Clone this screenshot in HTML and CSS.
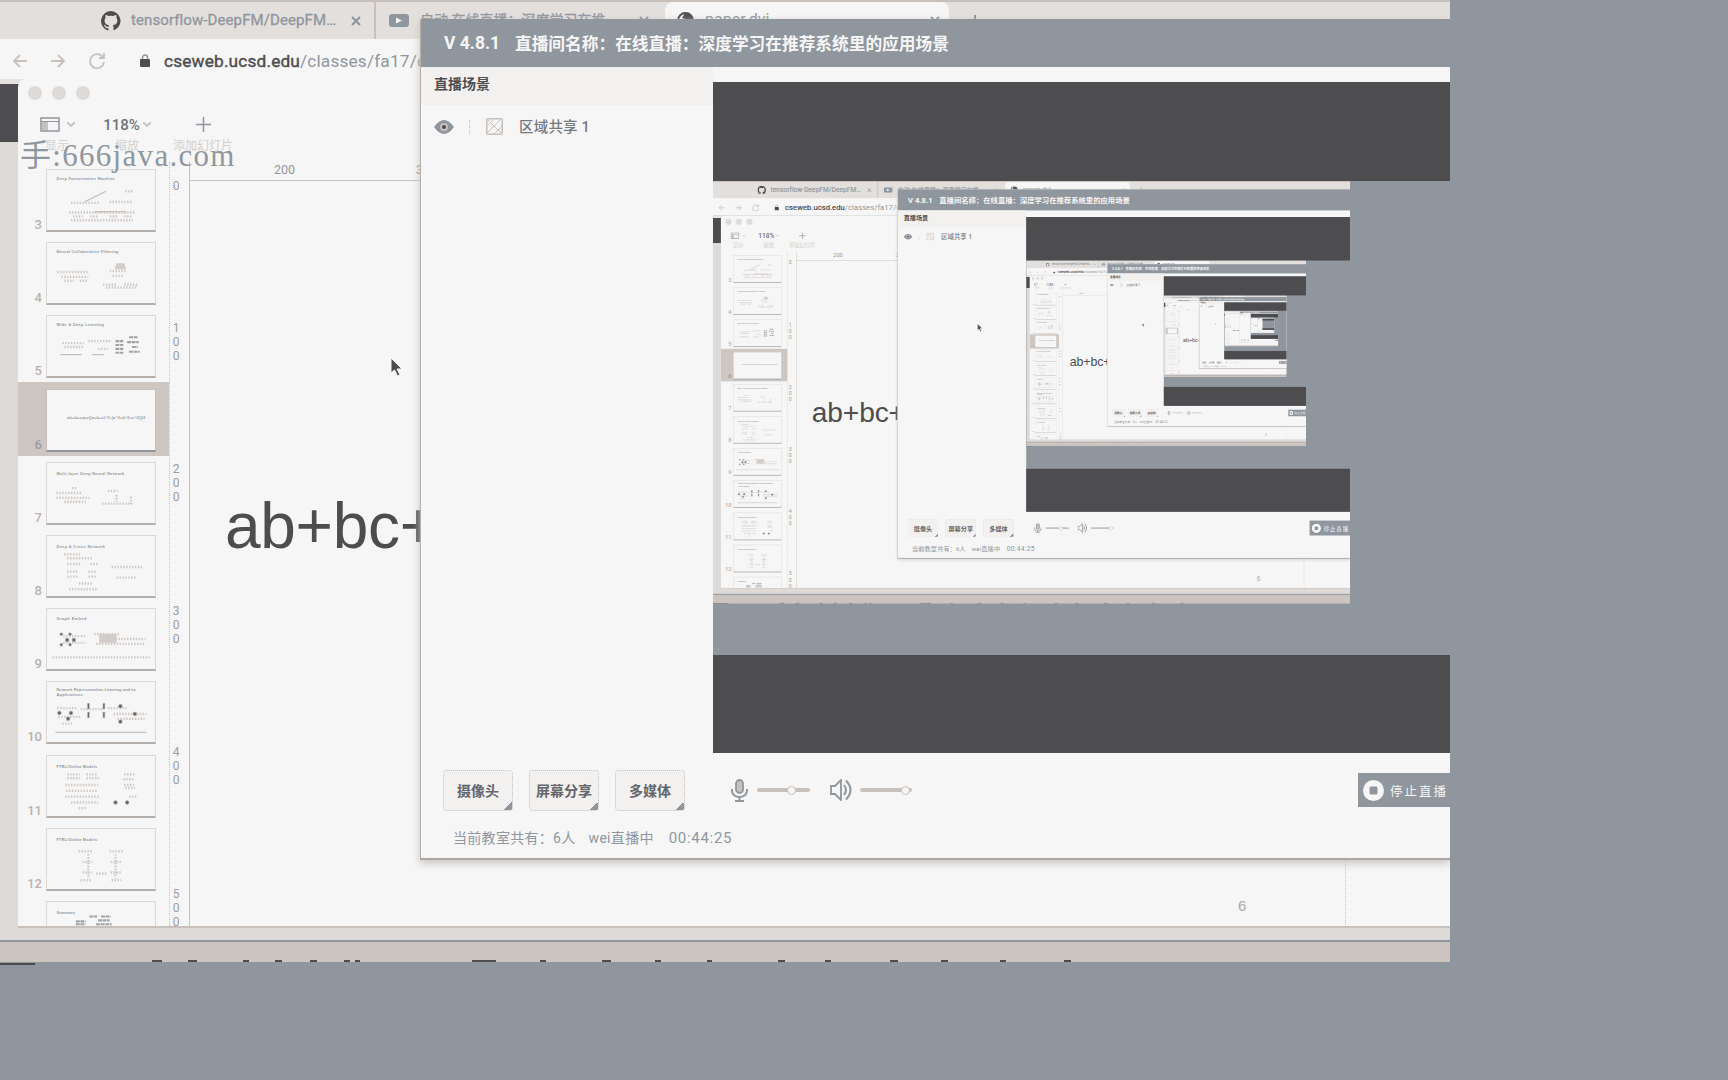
FILE: index.html
```html
<!DOCTYPE html>
<html lang="zh-CN">
<head>
<meta charset="utf-8">
<title>在线直播</title>
<link rel="stylesheet" href="styles.css">
</head>
<body>
<svg width="0" height="0" class="defs" aria-hidden="true">
  <symbol id="github" viewBox="0 0 16 16"><path d="M8 0a8 8 0 0 0-2.5 15.6c.4.1.5-.2.5-.4v-1.500c-2.200.5-2.700-1-2.700-1-.4-.9-.9-1.200-.9-1.200-.7-.5.1-.5.1-.5.8.1 1.200.8 1.200.8.7 1.200 1.900.9 2.300.7.1-.5.3-.9.5-1.100-1.800-.2-3.600-.9-3.600-4 0-.9.3-1.600.8-2.100-.1-.2-.4-1 .1-2.100 0 0 .7-.2 2.200.8a7.500 7.500 0 0 1 4 0c1.500-1 2.200-.8 2.200-.8.4 1.100.2 1.900.1 2.100.5.6.8 1.300.8 2.100 0 3.100-1.900 3.700-3.700 3.900.3.300.6.8.6 1.500v2.200c0 .2.1.5.6.4A8 8 0 0 0 8 0z" fill="#4d4d4f"/></symbol>
</svg>

<div class="screen" id="screen">
  <div class="browser">
    <div class="tabs">
      <div class="tab tab-repo">
        <svg width="20" height="20"><use href="#github"/></svg>
        <span class="tab-title">tensorflow-DeepFM/DeepFM…</span>
        <svg width="10" height="10" viewBox="0 0 10 10" class="line"><path d="M1 1l8 8M9 1l-8 8"/></svg>
      </div>
      <div class="tab tab-video">
        <svg width="20" height="13" viewBox="0 0 20 13"><rect width="20" height="13" rx="3" fill="#8f969e"/><path d="M7 3.500l6 3-6 3z" fill="#f6f6f6"/></svg>
        <span class="tab-title">启动 在线直播：深度学习在推…</span>
        <svg width="10" height="10" viewBox="0 0 10 10" class="line"><path d="M1 1l8 8M9 1l-8 8"/></svg>
      </div>
      <div class="tab tab-paper">
        <svg width="17" height="17" viewBox="0 0 17 17"><circle cx="8.500" cy="8.500" r="7.500" fill="#f6f6f6" stroke="#4d4d4f" stroke-width="2"/><path d="M8 1c6 0 8 4 8 7.500L12 12 8 7 5 6z" fill="#4d4d4f"/></svg>
        <span class="tab-title">paper.dvi</span>
        <svg width="10" height="10" viewBox="0 0 10 10" class="line"><path d="M1 1l8 8M9 1l-8 8"/></svg>
      </div>
      <svg width="12" height="12" viewBox="0 0 12 12" class="line new-tab"><path d="M6 0v12M0 6h12"/></svg>
    </div>
    <div class="address">
      <svg width="14" height="14" viewBox="0 0 14 14" class="nav"><path d="M14 7H1M7 1L1 7l6 6"/></svg>
      <svg width="14" height="14" viewBox="0 0 14 14" class="nav"><path d="M0 7h13M7 1l6 6-6 6"/></svg>
      <svg width="16" height="16" viewBox="0 0 16 16" class="nav"><path d="M14 4.500A7 7 0 1 0 15 9M15 0v5h-5"/></svg>
      <div class="url">
        <svg width="10" height="13" viewBox="0 0 10 13"><rect y="5" width="10" height="8" rx="1" fill="#4d4d4f"/><path d="M2.500 5V3.500a2.500 2.500 0 0 1 5 0V5" fill="none" stroke="#8f969e" stroke-width="1.500"/></svg>
        <span><b>cseweb.ucsd.edu</b>/classes/fa17/cse291-b/paper.dvi</span>
      </div>
    </div>
  </div>

  <div class="edge"></div>

  <div class="keynote">
    <div class="lights"><i></i><i></i><i></i></div>
    <div class="tools">
      <div class="tool view"><span class="face"><svg width="20" height="15" viewBox="0 0 20 15"><rect x="1" y="1" width="18" height="13" fill="none" stroke="#8f969e" stroke-width="1.500"/><path d="M1 4.500h18M7 4.500V14" stroke="#8f969e" fill="none"/><path d="M2 5h4v8H2z" fill="#c8c0bb"/></svg><svg width="8" height="5" viewBox="0 0 8 5" class="nav"><path d="M0 0l4 4 4-4"/></svg></span><small>显示</small></div>
      <div class="tool zoom"><span class="face">118%<svg width="8" height="5" viewBox="0 0 8 5" class="nav"><path d="M0 0l4 4 4-4"/></svg></span><small>缩放</small></div>
      <div class="tool add"><span class="face"><svg width="15" height="15" viewBox="0 0 15 15" class="line"><path d="M7.500 0v15M0 7.500h15" stroke-width="1.500"/></svg></span><small>添加幻灯片</small></div>
    </div>
    <div class="work">
      <div class="slides">
        <div class="slide"><em>3</em><svg class="card" viewBox="0 0 110 62"><text x="9" y="10" textLength="60">Deep Factorization Machine</text><g class="dots"><path d="M24 34h30M64 33h24M22 44h68M24 52h64M26 48h10M44 48h8M64 48h8M79 48h8"/><path d="M80 22h9"/></g><path class="thin" d="M38 33L60 22M48 43h33"/></svg></div>
        <div class="slide"><em>4</em><svg class="card" viewBox="0 0 110 62"><text x="9" y="10" textLength="64">Neural Collaborative Filtering</text><g class="dots"><path d="M10 30h32M14 35h28M17 39h10M33 39h8M64 29h18M67 34h12M57 43h14M79 43h14M60 46h32"/></g><path class="soft" d="M71 21h8l2 6H69z"/></svg></div>
        <div class="slide"><em>5</em><svg class="card" viewBox="0 0 110 62"><text x="9" y="10" textLength="49">Wide &amp; Deep Learning</text><g class="dots"><path d="M15 28h22M42 26h24M17 32h20M52 34h10"/></g><path class="thin" d="M13 40h22M46 40h12"/><g class="bars"><path d="M70 26h8M70 30h8M70 34h8M70 38h8M84 22h9M82 27h12M87 32h6M84 37h11"/></g></svg></div>
        <div class="slide active"><em>6</em><svg class="card" viewBox="0 0 110 62"><text x="20" y="30" textLength="81">ab+bc+ac=((a+b+c)^2-(a^2+b^2+c^2))/2</text></svg></div>
        <div class="slide"><em>7</em><svg class="card" viewBox="0 0 110 62"><text x="9" y="12" textLength="70">Multi-layer Deep Neural Network</text><g class="dots"><path d="M9 31h27M9 36h34M17 40h24M25 26h6M56 42h32M62 29h10M71 33v7M86 35v7"/></g></svg></div>
        <div class="slide"><em>8</em><svg class="card" viewBox="0 0 110 62"><text x="9" y="12" textLength="50">Deep &amp; Cross Network</text><g class="dots"><path d="M17 19h18M20 23h26M20 29h15M44 29h8M20 37h12M42 37h9M20 42h12M42 42h9M32 49h15M22 55h30M66 32h32M71 43h20"/></g></svg></div>
        <div class="slide"><em>9</em><svg class="card" viewBox="0 0 110 62"><text x="9" y="11" textLength="31">Graph Embed</text><g class="dots"><path d="M16 28h24M16 35h22M48 26h26M70 31h31M50 36h50M5 50h102"/></g><path class="soft" d="M53 26h18v9H53z"/><g class="nodes"><circle cx="14" cy="26" r="1.500"/><circle cx="23" cy="26" r="1.500"/><circle cx="20" cy="32" r="2"/><circle cx="27" cy="32" r="2"/><circle cx="14" cy="37" r="1.500"/><circle cx="23" cy="37" r="1.500"/></g></svg></div>
        <div class="slide"><em>10</em><svg class="card" viewBox="0 0 110 62"><text x="9" y="9" textLength="82">Network Representation Learning and its</text><text x="9" y="14" textLength="27">Applications</text><g class="dots"><path d="M10 27h20M11 36h24M15 43h10M34 28h24M62 27h20M68 33h34M72 38h28"/></g><path class="thin" d="M8 52h94"/><g class="nodes"><circle cx="12" cy="32" r="2"/><circle cx="24" cy="32" r="2"/><circle cx="21" cy="38" r="2"/><circle cx="75" cy="25" r="2"/><circle cx="90" cy="33" r="2"/><circle cx="75" cy="41" r="2"/><path d="M41 22h2v6h-2zM57 22h2v6h-2zM41 31h2v6h-2zM57 31h2v6h-2z"/></g></svg></div>
        <div class="slide"><em>11</em><svg class="card" viewBox="0 0 110 62"><text x="9" y="12" textLength="42">FTRL/Online Models</text><g class="dots"><path d="M20 19h13M40 19h12M20 23h13M40 23h13M18 30h34M19 36h33M18 42h36M24 48h28M32 54h8M79 19h11M78 24h12M79 30h10M80 33h10M84 42h8"/></g><g class="nodes"><circle cx="70" cy="48" r="2"/><circle cx="82" cy="48" r="2"/></g></svg></div>
        <div class="slide"><em>12</em><svg class="card" viewBox="0 0 110 62"><text x="9" y="12" textLength="42">FTRL/Online Models</text><g class="dots"><path d="M32 23h14M64 23h14M36 34h10M65 34h11M36 45h10M50 46h12M65 45h11M34 53h12M66 53h10M42 26v25M70 26v25"/></g></svg></div>
        <div class="slide"><em></em><svg class="card" viewBox="0 0 110 62"><text x="9" y="12" textLength="19">Summary</text><g class="bars"><path d="M29 20h10M29 23h10M43 15h8M55 15h10M52 19h12M50 23h16"/></g></svg></div>
      </div>
      <div class="ruler-y"><span>0</span><span>1 0 0</span><span>2 0 0</span><span>3 0 0</span><span>4 0 0</span><span>5 0 0</span></div>
      <div class="stage">
        <div class="ruler-x"><span>200</span><span>300</span></div>
        <div class="page"><p class="formula">ab+bc+ac</p><div class="page-foot"><span class="page-no">6</span></div></div>
      </div>
    </div>
  </div>
  <div class="dock"><svg width="1100" height="2" viewBox="0 0 1100 2"><path d="M152 1h10M188 1h9M243 1h6M275 1h7M310 1h7M344 1h6M355 1h5M472 1h24M540 1h6M602 1h9M655 1h6M707 1h5M778 1h7M825 1h6M890 1h8M941 1h7M1000 1h6M1064 1h7" stroke="#4d4d4f" stroke-width="2"/></svg></div>
  <div class="under"></div>

  <div class="live">
    <div class="titlebar"><span class="version">V 4.8.1</span><span>直播间名称：</span><span>在线直播：</span><span>深度学习在推荐系统里的应用场景</span></div>
    <div class="body">
      <div class="scenes">
        <div class="scenes-head">直播场景</div>
        <div class="scene">
          <svg width="20" height="14" viewBox="0 0 20 14"><path d="M0 7q10-14 20 0-10 14-20 0z" fill="#8f969e"/><circle cx="10" cy="7" r="4" fill="#c8c0bb"/><circle cx="10" cy="7" r="2" fill="#4d4d4f"/></svg>
          <i class="split"></i>
          <svg width="17" height="17" viewBox="0 0 17 17"><rect x=".75" y=".75" width="15.500" height="15.500" rx="1" fill="none" stroke="#c8c0bb" stroke-width="1.500"/><path d="M1 8l7-7M1 15L15 1M8 16l8-8M2 2l13 13" stroke="#c8c0bb" fill="none"/></svg>
          <span>区域共享 1</span>
        </div>
      </div>
      <div class="preview"><div class="capture"></div></div>
    </div>
    <div class="controls">
      <div class="btn">摄像头</div><div class="btn">屏幕分享</div><div class="btn">多媒体</div>
      <svg class="mic" width="17" height="23" viewBox="0 0 17 23"><rect x="5" y="1" width="7" height="13" rx="3.500" fill="#c8c0bb" stroke="#8f969e" stroke-width="1.800"/><path d="M1 10v2a7.500 6 0 0 0 15 0v-2M8.500 18v4M4 22h9" fill="none" stroke="#8f969e" stroke-width="2"/></svg>
      <div class="slider mic-level"><i></i></div>
      <svg class="speaker" width="22" height="22" viewBox="0 0 22 22"><path d="M1 7h4l6-6v20l-6-6H1z" fill="none" stroke="#8f969e" stroke-width="1.800"/><path d="M14 6q4 5 0 10M16 1.500q9 9.500 0 19" fill="none" stroke="#8f969e" stroke-width="2"/></svg>
      <div class="slider vol-level"><i></i></div>
      <div class="stop"><svg width="21" height="21" viewBox="0 0 21 21"><circle cx="10.500" cy="10.500" r="10.500" fill="#f6f6f6"/><rect x="6.500" y="6.500" width="8" height="8" rx="1.500" fill="#8f969e"/></svg><span>停止直播</span></div>
    </div>
    <div class="status"><span>当前教室共有：</span><span>6人</span><span>wei直播中</span><span class="clock">00:44:25</span></div>
  </div>

  <svg class="pointer" width="13" height="20" viewBox="0 0 13 20"><path d="M1 1v15l3.500-3 3 6 2.500-1.300-3-5.700H12z" fill="#4d4d4f" stroke="#f6f6f6"/></svg>
  <div class="watermark">手:666java.com</div>
</div>
<script src="mirror.js"></script>
</body>
</html>
```

FILE: mirror.js
```js
// The shared region contains the preview itself, so the screen repeats inside it.
const source = document.getElementById('screen').cloneNode(true);
source.removeAttribute('id');
source.querySelector('.watermark').remove();
source.classList.add('mirrored');

let target = document.querySelector('.capture');
for (let depth = 0; depth < 5; depth++) {
  const copy = source.cloneNode(true);
  target.appendChild(copy);
  target = copy.querySelector('.capture');
}
```

FILE: styles.css
```css
* { box-sizing: border-box; }
html, body { margin: 0; height: 100%; overflow: hidden; }
body {
  background: #8f969e;
  color: #8f969e;
  font-family: Roboto, "Noto Sans CJK SC", sans-serif;
  font-size: 14px;
}
svg { display: block; flex: none; }
.defs { position: absolute; }
.line { fill: none; stroke: #8f969e; stroke-width: 2; }
.nav { fill: none; stroke: #c8c0bb; stroke-width: 1.800; }

.screen { position: relative; width: 1450px; height: 966px; overflow: hidden; background: #8f969e; }

/* Browser */
.browser { height: 79px; background: #f6f6f6; }
.tabs { display: flex; align-items: center; height: 39px; background: #e3dfdc; border-top: 2px solid #c8c0bb; font-size: 15.200px; }
.tab { display: flex; align-items: center; height: 37px; white-space: nowrap; }
.tab-title { overflow: hidden; padding-bottom: 2px; }
.tab-repo { width: 376px; padding-left: 101px; gap: 10px; border-right: 2px solid #c8c0bb; }
.tab-repo .tab-title { width: 210px; font-size: 15px; letter-spacing: .1px; -webkit-text-stroke: .3px #8f969e; }
.tab-video { width: 289px; padding-left: 13px; gap: 11px; }
.tab-video .tab-title { width: 208px; font-size: 14px; padding-bottom: 4px; -webkit-text-stroke: .3px #8f969e; }
.tab-paper { width: 284px; padding-left: 12px; gap: 11px; background: #f6f6f6; border-radius: 8px 8px 0 0; }
.tab-paper .tab-title { width: 214px; font-size: 16px; }
.new-tab { margin-left: 20px; }
.address { display: flex; align-items: center; height: 40px; padding: 5px 0 2px 13px; gap: 24px; }
.url { display: flex; align-items: center; gap: 14px; flex: 1; height: 33px; white-space: nowrap; font-size: 17.300px; letter-spacing: .15px; }
.nav + .url { margin-left: 11px; }
.url b { font-weight: 400; color: #4d4d4f; -webkit-text-stroke: .4px #4d4d4f; }

/* Left strip of the desktop beside the document window */
.edge { width: 1450px; height: 861px; background: linear-gradient(#e6e2df 5px, #4d4d4f 5px 63px, #dedad7 63px); }

/* Document window */
.keynote { position: absolute; left: 18px; top: 79px; width: 1432px; height: 849px; display: flex; flex-direction: column; background: #f6f6f6; border-bottom: 2px solid #c8c0bb; border-radius: 8px 0 0 0; }
.lights { display: flex; gap: 10px; padding: 7px 10px 0; height: 31px; }
.lights i { width: 14px; height: 14px; border-radius: 50%; background: #dedad7; }
.tools { display: flex; height: 52px; }
.tool { display: flex; flex-direction: column; align-items: center; }
.tool .face { display: flex; align-items: center; gap: 7px; height: 30px; color: #6f7479; font-size: 14px; font-weight: 500; }
.tool.zoom .face { gap: 3px; font-size: 15px; }
.tool small { font-size: 12px; line-height: 12px; color: #d5cfcb; }
.tool.view { width: 78px; }
.tool.zoom { width: 62px; }
.tool.add { width: 90px; }
.work { display: flex; height: 765px; overflow: hidden; }
.slides { width: 152px; padding-top: 1px; border-right: 1px dotted #c8c0bb; }
.slide { display: flex; align-items: flex-end; height: 73.200px; padding: 0 0 4px; }
.slide em { width: 24px; text-align: right; font: 500 13px/15px Roboto, sans-serif; color: #b9b2ae; margin-right: 4px; }
.card { width: 110px; height: 63px; border: 1px solid #ddd8d5; border-bottom: 2px solid #b5afab; background: #f6f6f6; }
.card text { font: 700 4px "Liberation Sans", sans-serif; fill: #8f969e; }
.card path { fill: none; }
.dots { stroke: #d0c9c5; stroke-width: 2.500; stroke-dasharray: 1.500 1.500; }
.thin { stroke: #c8c0bb; stroke-width: 1.300; }
.card .soft { fill: #d3cdc9; }
.bars { stroke: #9fa1a4; stroke-width: 2.200; stroke-dasharray: 4 .7; }
.nodes, .nodes path { fill: #646569; }
.nodes { stroke: #c8c0bb; stroke-width: .6; }
.slide.active { background: #cdc6c1; }
.slide.active em { color: #9b9c9f; }
.slide.active .card { border-color: #c8c0bb; border-bottom: 2px solid #8f969e; }
.ruler-y { width: 20px; padding-left: 1px; border-right: 1px solid #c8c0bb; }
.ruler-y span { display: block; width: 10px; height: 141.500px; text-align: center; font: 12px/14px Roboto, sans-serif; color: #9b9c9f; }
.ruler-y span:first-child { height: 143px; padding-top: 17px; margin-bottom: 16px; }
.stage { flex: 1; }
.ruler-x { height: 19px; border-bottom: 1px solid #c8c0bb; font: 12.500px/15px Roboto, sans-serif; display: flex; gap: 121px; padding-left: 84px; }
.page { display: flex; flex-direction: column; height: 746px; }
.formula { margin: 308px 0 0 35px; color: #4d4d4f; font: 64px/74px "Liberation Sans", sans-serif; letter-spacing: -.3px; }
.page-foot { margin-top: 284px; height: 80px; width: 1156px; padding: 49px 0 0 1048px; border-right: 1px dotted #c8c0bb; font: 15px/20px "Liberation Sans", sans-serif; color: #aaa8a8; }

.dock { height: 22px; display: flex; align-items: flex-end; background: #cbc4bf; border-top: 2px solid #8f969e; }
.under { width: 35px; height: 4px; border-top: 1px solid #8f969e; border-bottom: 1px solid #8f969e; background: #4d4d4f; }

/* Live streaming client */
.live { position: absolute; left: 420px; top: 19px; width: 1030px; height: 841px; background: #f6f6f6; border-left: 1px solid #b5afab; border-bottom: 2px solid #aaa6a5; box-shadow: 0 3px 8px #c8c0bb; }
.titlebar { display: flex; align-items: center; height: 48px; padding-left: 23px; background: #8f969e; color: #f6f6f6; font-size: 16.700px; font-weight: 700; white-space: nowrap; }
.version { width: 71px; font-size: 17.500px; }
.body { display: flex; height: 686px; }
.scenes { width: 292px; font-size: 14px; }
.scenes-head { height: 38px; padding: 7px 0 0 13px; line-height: 21px; background: #f2f1f0; color: #4d4d4f; font-weight: 700; }
.scene { display: flex; align-items: center; height: 43px; padding-left: 13px; color: #76797e; font-weight: 500; font-size: 14.500px; }
.split { height: 14px; margin: 0 16px 0 15px; border-left: 1px dotted #c8c0bb; }
.scene span { margin-left: 16px; padding-bottom: 2px; letter-spacing: .2px; }
/* Letterboxed preview */
.preview { flex: 1; margin-top: 15px; background: #8f969e; border-top: 99px solid #4d4d4f; border-bottom: 98px solid #4d4d4f; overflow: hidden; height: 671px; }
.capture { width: 637px; height: 423px; overflow: hidden; }
.mirrored { transform: scale(.4393); transform-origin: 0 0; }
.mirrored .pointer { left: 601px; top: 324px; }
.controls { display: flex; align-items: center; height: 74px; padding-left: 22px; }
.btn { width: 70px; height: 41px; margin-right: 16px; display: flex; align-items: center; justify-content: center; border: 1px dotted #c8c0bb; border-radius: 4px; color: #63666b; font-weight: 700; font-size: 14px; white-space: nowrap; background: linear-gradient(135deg, transparent 50%, #8f969e 50%) right bottom / 8px 8px no-repeat #f3f1f0; }
.mic { margin-left: 30px; }
.slider { height: 4px; background: #c8c0bb; border-radius: 2px; display: flex; align-items: center; }
.slider i { width: 9px; height: 9px; border-radius: 50%; background: #f6f6f6; border: 1.500px solid #c8c0bb; }
.mic-level { width: 53px; margin: 0 20px 0 9px; padding-left: 30px; }
.vol-level { width: 52px; margin-left: 8px; padding-left: 41px; }
.stop { display: flex; align-items: center; gap: 6px; width: 92px; height: 34px; margin-left: auto; padding-left: 5px; background: #8f969e; color: #f6f6f6; font-size: 12.500px; letter-spacing: 2px; white-space: nowrap; }
.status { display: flex; padding: 1px 0 0 32px; line-height: 20px; font-size: 14px; }
.status span { margin-right: 13px; letter-spacing: .3px; }
.status span:first-child { margin-right: 0; }
.status .clock { margin-left: 2px; font-size: 15px; letter-spacing: .7px; }

.pointer { position: absolute; left: 390px; top: 357px; }
.watermark { position: absolute; left: 20px; top: 138px; font: 31px/36px "Liberation Serif", "Noto Sans CJK SC", serif; letter-spacing: 1.300px; color: #8f969e; }
```
